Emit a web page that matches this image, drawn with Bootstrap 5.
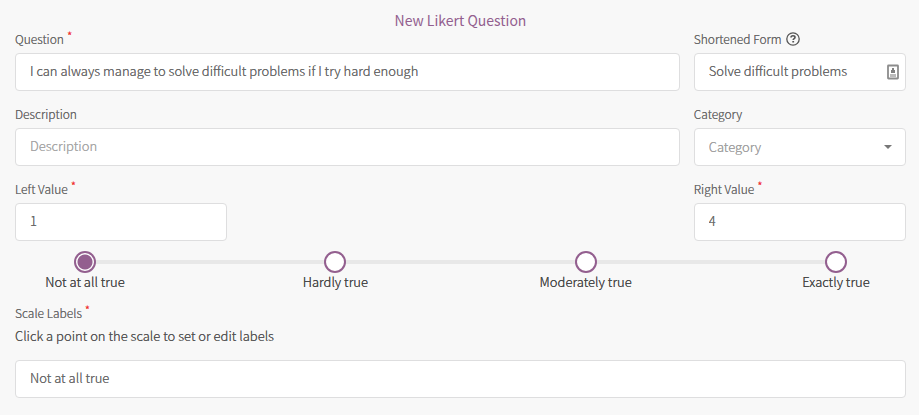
<!DOCTYPE html>
<html lang="en">
<head>
<meta charset="utf-8">
<meta name="viewport" content="width=device-width, initial-scale=1">
<title>New Likert Question</title>
<link href="https://cdn.jsdelivr.net/npm/bootstrap@5.3.0/dist/css/bootstrap.min.css" rel="stylesheet">
<style>
body { background: #f8f8f8; color: #555; font: 300 13px/18px "Noto Sans CJK SC", "Open Sans", sans-serif; text-shadow: 0 0 0 currentColor; }
.likert-form { padding: 10px 13px 16px 15px; }
.form-title { color: #935f8f; font-size: 14px; line-height: 20px; font-weight: 400; text-shadow: none; }
.field-row { --bs-gutter-x: 14px; margin-bottom: 14px; }
.field-label { display: block; height: 18px; margin-bottom: 5px; font-size: 12px; line-height: 18px; color: #686868; white-space: nowrap; }
.required::after { content: "*"; color: #f03030; margin-left: 3px; position: relative; top: -3px; }
.form-control, .form-select { height: 38px; padding: 0 14px; font-size: 13px; font-weight: 300; line-height: 36px; color: #686868; text-shadow: 0 0 0 currentColor; background-color: #fff; border: 1px solid #dededf; border-radius: 4px; }
.form-control { padding-bottom: 3px; }
.form-control::placeholder { color: #a6a6a6; }
.form-select { color: #a0a0a0; background-image: none; }
.help-btn { color: #555; vertical-align: top; line-height: 0; margin-left: 2px; }
.overlay-icon { right: 0; top: 0; height: 38px; pointer-events: none; }
.scale { margin-top: -4px; margin-bottom: 13px; background: linear-gradient(#e8e8e8, #e8e8e8) no-repeat center 9px / calc(100% - 140px) 4px; }
.scale-point { width: 140px; color: #464646; cursor: pointer; }
.scale-point input { appearance: none; width: 22px; height: 22px; margin: 0; border: 2px solid #935f8f; border-radius: 50%; background: #fff; }
.scale-point input:checked { background: radial-gradient(circle, #935f8f 7px, #fff 8px); }
.scale-hint { margin-bottom: 15px; }
</style>
<script src="https://cdn.jsdelivr.net/npm/bootstrap@5.3.0/dist/js/bootstrap.bundle.min.js"></script>
</head>
<body>
<form class="likert-form">
  <h1 class="form-title text-center mb-0">New Likert Question</h1>
  <div class="row field-row">
    <div class="col-9">
      <label class="field-label required" for="question">Question</label>
      <input class="form-control" id="question" type="text" value="I can always manage to solve difficult problems if I try hard enough">
    </div>
    <div class="col-3">
      <div class="field-label"><label for="short">Shortened Form</label>
        <button class="btn p-0 border-0 help-btn" type="button" aria-label="Help"><svg width="14" height="18" viewBox="0 0 14 18" fill="none" stroke="currentColor"><circle cx="7" cy="9" r="6.2" stroke-width="1.3"/><path d="M5 7.6C5 6.4 5.8 5.8 7 5.8S9 6.4 9 7.4C9 8.6 7.2 8.7 7.2 10" stroke-width="1.6"/><path d="M7.2 11v1.5" stroke-width="1.8"/></svg></button></div>
      <div class="position-relative">
        <input class="form-control" id="short" type="text" value="Solve difficult problems">
        <svg class="position-absolute overlay-icon" width="20" height="38" viewBox="0 0 20 38"><rect x="2" y="12.5" width="10" height="13" rx=".5" fill="#fff" stroke="#8c8c8c" stroke-width="1.8"/><path d="M6 15h2v2h1v3H5v-3h1z" fill="#808080"/><path d="M4 21h6v3H4z" fill="#bbb"/></svg>
      </div>
    </div>
  </div>
  <div class="row field-row">
    <div class="col-9">
      <label class="field-label" for="description">Description</label>
      <input class="form-control" id="description" type="text" placeholder="Description">
    </div>
    <div class="col-3">
      <label class="field-label" for="category">Category</label>
      <div class="position-relative">
        <select class="form-select" id="category"><option>Category</option></select>
        <svg class="position-absolute overlay-icon" width="24" height="38" viewBox="0 0 24 38"><path d="M2 17h8l-4 4z" fill="#777"/></svg>
      </div>
    </div>
  </div>
  <div class="row field-row">
    <div class="col-3">
      <label class="field-label required" for="left">Left Value</label>
      <input class="form-control" id="left" type="text" value="1">
    </div>
    <div class="col-3 offset-6">
      <label class="field-label required" for="right">Right Value</label>
      <input class="form-control" id="right" type="text" value="4">
    </div>
  </div>
  <div class="scale d-flex justify-content-between" role="radiogroup" aria-label="Scale">
    <label class="scale-point d-flex flex-column align-items-center"><input type="radio" name="point" checked>Not at all true</label>
    <label class="scale-point d-flex flex-column align-items-center"><input type="radio" name="point">Hardly true</label>
    <label class="scale-point d-flex flex-column align-items-center"><input type="radio" name="point">Moderately true</label>
    <label class="scale-point d-flex flex-column align-items-center"><input type="radio" name="point">Exactly true</label>
  </div>
  <label class="field-label required" for="point-label">Scale Labels</label>
  <p class="scale-hint">Click a point on the scale to set or edit labels</p>
  <input class="form-control" id="point-label" type="text" value="Not at all true">
</form>
</body>
</html>
